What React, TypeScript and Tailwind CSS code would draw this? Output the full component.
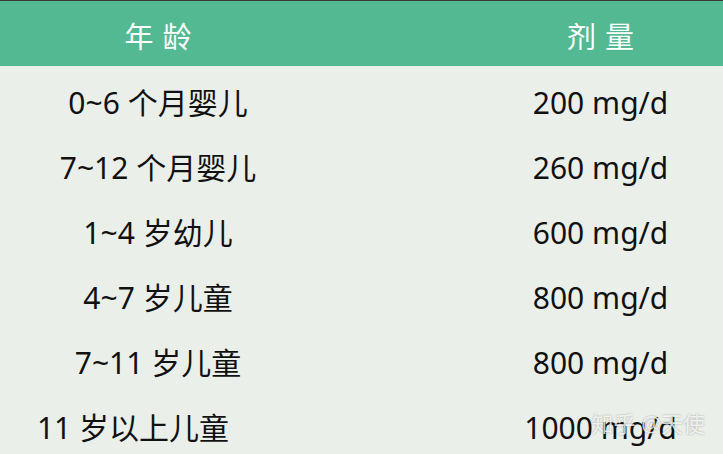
const rows: { age: string; dose: string; shift?: boolean }[] = [
  { age: "0~6 个月婴儿", dose: "200 mg/d" },
  { age: "7~12 个月婴儿", dose: "260 mg/d" },
  { age: "1~4 岁幼儿", dose: "600 mg/d" },
  { age: "4~7 岁儿童", dose: "800 mg/d" },
  { age: "7~11 岁儿童", dose: "800 mg/d" },
  { age: "11 岁以上儿童", dose: "1000 mg/d", shift: true },
]

export default function App() {
  return (
    <div
      className="relative h-[454px] w-[723px] overflow-hidden bg-[#ebefea] text-[#111]"
      style={{ fontFamily: '"Noto Sans", "Noto Sans CJK SC", sans-serif' }}
    >
      <div className="flex h-[66px] items-center border-t border-[#3a3a3a] bg-[#52b992] pt-[7px] text-[29px] tracking-[9px] text-white">
        <div className="w-[316px] pl-[9px] text-center">年龄</div>
        <div className="ml-auto w-[245px] pl-[9px] text-center">剂量</div>
      </div>
      <div className="flex flex-col pt-[4px]">
        {rows.map((r, i) => (
          <div key={i} className="flex h-[65px] items-center text-[30px]">
            <div className={`w-[316px] text-center ${r.shift ? "pr-[50px]" : ""}`}>
              {r.age}
            </div>
            <div className="ml-auto w-[245px] text-center">{r.dose}</div>
          </div>
        ))}
      </div>
      <div
        className="absolute bottom-[14px] right-[18px] text-[22px] text-white/80"
        style={{ textShadow: "0 0 2px rgba(0,0,0,0.35)" }}
      >
        知乎 @天使
      </div>
    </div>
  )
}
